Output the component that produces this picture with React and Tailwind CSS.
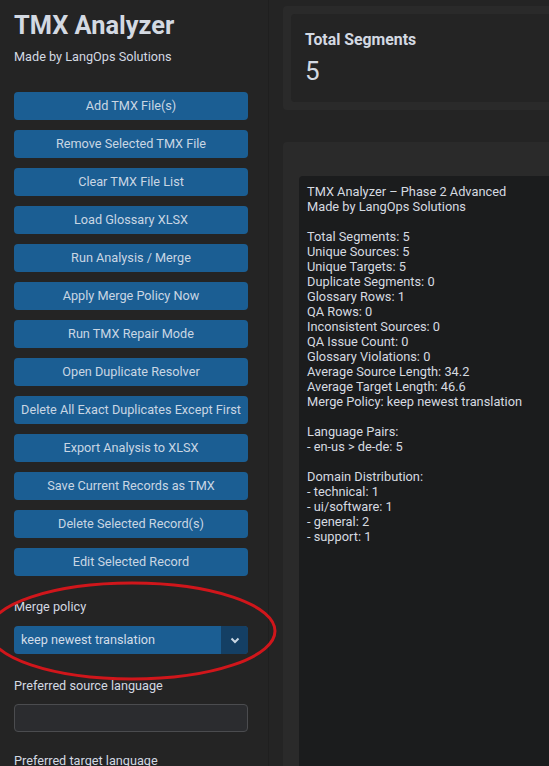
import React from "react";

const buttons = [
  "Add TMX File(s)",
  "Remove Selected TMX File",
  "Clear TMX File List",
  "Load Glossary XLSX",
  "Run Analysis / Merge",
  "Apply Merge Policy Now",
  "Run TMX Repair Mode",
  "Open Duplicate Resolver",
  "Delete All Exact Duplicates Except First",
  "Export Analysis to XLSX",
  "Save Current Records as TMX",
  "Delete Selected Record(s)",
  "Edit Selected Record",
];

const report = `TMX Analyzer – Phase 2 Advanced
Made by LangOps Solutions

Total Segments: 5
Unique Sources: 5
Unique Targets: 5
Duplicate Segments: 0
Glossary Rows: 1
QA Rows: 0
Inconsistent Sources: 0
QA Issue Count: 0
Glossary Violations: 0
Average Source Length: 34.2
Average Target Length: 46.6
Merge Policy: keep newest translation

Language Pairs:
- en-us > de-de: 5

Domain Distribution:
- technical: 1
- ui/software: 1
- general: 2
- support: 1`;

export default function App() {
  return (
    <div
      className="relative flex h-[766px] w-[549px] overflow-hidden bg-[#242424] text-[#d3d9e2]"
      style={{ fontFamily: "Roboto, 'Noto Sans', sans-serif" }}
    >
      {/* Sidebar */}
      <div className="flex w-[269px] shrink-0 flex-col border-r border-[#1f1f1f] bg-[#242424] px-[14px] pt-[9px]">
        <h1 className="shrink-0 text-[25.4px] font-bold leading-[32px] text-[#d3d9e2]">TMX Analyzer</h1>
        <p className="mt-[8px] shrink-0 text-[12.7px] leading-[16px] text-[#d3d9e2]">Made by LangOps Solutions</p>
        <div className="mt-[27px] flex w-[234px] shrink-0 flex-col gap-[10px]">
          {buttons.map((b) => (
            <button
              key={b}
              className="flex h-[28px] w-full shrink-0 items-center justify-center rounded-[4px] bg-[#1b5e93] text-[12.7px] text-[#c9d6e3]"
            >
              {b}
            </button>
          ))}
        </div>
        <div className="mt-[23px] shrink-0 text-[12.7px] leading-[16px] text-[#d3d9e2]">Merge policy</div>
        <div className="mt-[11px] flex h-[28px] w-[234px] shrink-0 overflow-hidden rounded-[4px] bg-[#1b5e93]">
          <div className="flex flex-1 items-center pl-[7px] text-[12.7px] text-[#d3dde8]">keep newest translation</div>
          <div className="flex w-[27px] items-center justify-center bg-[#143f64]">
            <svg width="10" height="7" viewBox="0 0 10 7">
              <path d="M1.5 1.5 L5 5 L8.5 1.5" fill="none" stroke="#c9d6e3" strokeWidth="2" />
            </svg>
          </div>
        </div>
        <div className="mt-[24px] shrink-0 text-[12.7px] leading-[16px] text-[#d3d9e2]">Preferred source language</div>
        <div className="mt-[10px] h-[28px] w-[234px] shrink-0 rounded-[4px] border border-[#4b4c4f] bg-[#2b2c2f]" />
        <div className="mt-[21px] shrink-0 text-[12.7px] leading-[16px] text-[#d3d9e2]">Preferred target language</div>
      </div>

      {/* Main */}
      <div className="flex min-w-0 flex-1 flex-col pl-[14px] pt-[6px]">
        <div className="w-[300px] shrink-0 rounded-[4px] bg-[#2a2a2a] p-[8px]">
          <div className="h-[88px] rounded-[4px] bg-[#242424] px-[14px] pt-[16px]">
            <div className="text-[15.8px] font-bold leading-[20px] text-[#d3d9e2]">Total Segments</div>
            <div className="mt-[6px] text-[26px] leading-[30px] text-[#d3d9e2]">5</div>
          </div>
        </div>
        <div className="mt-[32px] w-[300px] flex-1 rounded-t-[4px] bg-[#2a2a2a] pl-[16px] pt-[34px]">
          <pre
            className="h-full whitespace-pre rounded-tl-[4px] bg-[#1b1c1d] pl-[8px] pt-[8px] text-[12.8px] leading-[15px] text-[#d6dae0]"
            style={{ fontFamily: "Roboto, 'Noto Sans', sans-serif" }}
          >
            {report}
          </pre>
        </div>
      </div>

      {/* Annotation ellipse */}
      <svg
        className="pointer-events-none absolute left-0 top-0"
        width="549"
        height="766"
        viewBox="0 0 549 766"
      >
        <ellipse cx="132" cy="631" rx="143" ry="48" fill="none" stroke="#d0161b" strokeWidth="3" />
      </svg>
    </div>
  );
}
